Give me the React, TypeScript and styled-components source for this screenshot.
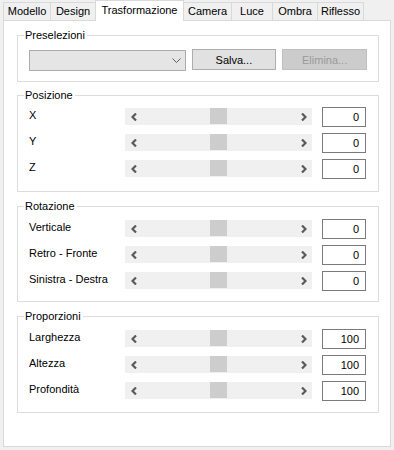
import styled, { createGlobalStyle } from "styled-components";

const GlobalStyle = createGlobalStyle`
  html, body {
    margin: 0;
    padding: 0;
    background: #f0f0f0;
  }
  * {
    box-sizing: border-box;
  }
`;

const tabs = [
  { name: "Modello", width: 48 },
  { name: "Design", width: 46 },
  { name: "Trasformazione", width: 89, active: true },
  { name: "Camera", width: 49 },
  { name: "Luce", width: 42 },
  { name: "Ombra", width: 46 },
  { name: "Riflesso", width: 47 },
];

const groups = [
  {
    title: "Posizione",
    mt: 13,
    pad: [11, 12],
    rows: [
      { label: "X", value: 0 },
      { label: "Y", value: 0 },
      { label: "Z", value: 0 },
    ],
  },
  {
    title: "Rotazione",
    mt: 14,
    pad: [12, 10],
    rows: [
      { label: "Verticale", value: 0 },
      { label: "Retro - Fronte", value: 0 },
      { label: "Sinistra - Destra", value: 0 },
    ],
  },
  {
    title: "Proporzioni",
    mt: 14,
    pad: [12, 11],
    rows: [
      { label: "Larghezza", value: 100 },
      { label: "Altezza", value: 100 },
      { label: "Profondità", value: 100 },
    ],
  },
];

const Window = styled.div`
  width: 394px;
  height: 450px;
  padding: 0 3px 3px 3px;
  display: flex;
  flex-direction: column;
  background: #f0f0f0;
  font-family: "Liberation Sans", Arial, sans-serif;
  font-size: 11px;
  color: #000;
`;

const TabBar = styled.div`
  height: 20px;
  display: flex;
  align-items: flex-end;
`;

const Tab = styled.div<{ $active?: boolean; $w: number }>`
  width: ${(p) => p.$w}px;
  height: ${(p) => (p.$active ? 21 : 18)}px;
  margin-left: -1px;
  margin-bottom: ${(p) => (p.$active ? -1 : 0)}px;
  display: flex;
  justify-content: center;
  padding-top: ${(p) => (p.$active ? 3 : 2)}px;
  line-height: 13px;
  border: 1px solid #d9d9d9;
  border-bottom: none;
  background: ${(p) => (p.$active ? "#fff" : "#f0f0f0")};
  position: relative;
  z-index: ${(p) => (p.$active ? 1 : 0)};
  &:first-child {
    margin-left: 0;
  }
`;

const Pane = styled.div`
  flex: 1;
  background: #fff;
  border: 1px solid #d9d9d9;
  padding: 0 11px 0 13px;
`;

const Group = styled.div<{ $mt: number; $top: number; $bottom: number }>`
  position: relative;
  margin-top: ${(p) => p.$mt}px;
  border: 1px solid #dcdcdc;
  padding: ${(p) => p.$top}px 11px ${(p) => p.$bottom}px 11px;
  display: flex;
  flex-direction: column;
  gap: 6px;
`;

const Legend = styled.span`
  position: absolute;
  top: -8px;
  left: 6px;
  padding: 0 2px 0 1px;
  background: #fff;
  line-height: 14px;
`;

const PresetRow = styled.div`
  display: flex;
  align-items: flex-start;
  gap: 6px;
`;

const Combo = styled.div`
  width: 157px;
  height: 21px;
  margin-top: 1px;
  background: #e5e5e5;
  border: 1px solid #acacac;
  display: flex;
  justify-content: flex-end;
  align-items: center;
  padding-right: 4px;
`;

const Button = styled.div<{ $disabled?: boolean }>`
  width: 85px;
  height: 21px;
  display: flex;
  align-items: center;
  justify-content: center;
  background: ${(p) => (p.$disabled ? "#cccccc" : "#e1e1e1")};
  border: 1px solid ${(p) => (p.$disabled ? "#bfbfbf" : "#adadad")};
  color: ${(p) => (p.$disabled ? "#9a9a9a" : "#000")};
`;

const SliderRow = styled.div`
  display: flex;
  align-items: flex-start;
  height: 20px;
`;

const Label = styled.div`
  width: 96px;
  line-height: 16px;
`;

const Track = styled.div`
  width: 187px;
  height: 17px;
  margin-top: 1px;
  background: #f0f0f0;
  display: flex;
`;

const ArrowBtn = styled.div`
  width: 17px;
  height: 17px;
  display: flex;
  align-items: center;
  justify-content: center;
`;

const Channel = styled.div`
  flex: 1;
  display: flex;
  justify-content: center;
`;

const Thumb = styled.div`
  width: 17px;
  height: 16px;
  background: #cdcdcd;
`;

const NumberBox = styled.div`
  width: 44px;
  height: 20px;
  margin-left: 10px;
  border: 1px solid #7a7a7a;
  display: flex;
  align-items: center;
  justify-content: flex-end;
  padding-right: 6px;
  background: #fff;
`;

const Chevron = ({ dir }: { dir: "left" | "right" }) => (
  <svg width="6" height="8" viewBox="0 0 6 8">
    <polyline
      points={dir === "left" ? "5,0.5 1.5,4 5,7.5" : "1,0.5 4.5,4 1,7.5"}
      fill="none"
      stroke="#5a5a5a"
      strokeWidth="2.2"
    />
  </svg>
);

const ComboArrow = () => (
  <svg width="9" height="5" viewBox="0 0 9 5">
    <polyline points="0.5,0.5 4.5,4.5 8.5,0.5" fill="none" stroke="#606060" strokeWidth="1" />
  </svg>
);

const App = () => {
  return (
    <Window>
      <GlobalStyle />
      <TabBar>
        {tabs.map((t) => (
          <Tab key={t.name} $w={t.width} $active={t.active}>
            {t.name}
          </Tab>
        ))}
      </TabBar>
      <Pane>
        <Group $mt={14} $top={13} $bottom={10}>
          <Legend>Preselezioni</Legend>
          <PresetRow>
            <Combo>
              <ComboArrow />
            </Combo>
            <Button>Salva...</Button>
            <Button $disabled>Elimina...</Button>
          </PresetRow>
        </Group>
        {groups.map((g) => (
          <Group key={g.title} $mt={g.mt} $top={g.pad[0]} $bottom={g.pad[1]}>
            <Legend>{g.title}</Legend>
            {g.rows.map((r) => (
              <SliderRow key={r.label}>
                <Label>{r.label}</Label>
                <Track>
                  <ArrowBtn>
                    <Chevron dir="left" />
                  </ArrowBtn>
                  <Channel>
                    <Thumb />
                  </Channel>
                  <ArrowBtn>
                    <Chevron dir="right" />
                  </ArrowBtn>
                </Track>
                <NumberBox>{r.value}</NumberBox>
              </SliderRow>
            ))}
          </Group>
        ))}
      </Pane>
    </Window>
  );
};

export default App;
